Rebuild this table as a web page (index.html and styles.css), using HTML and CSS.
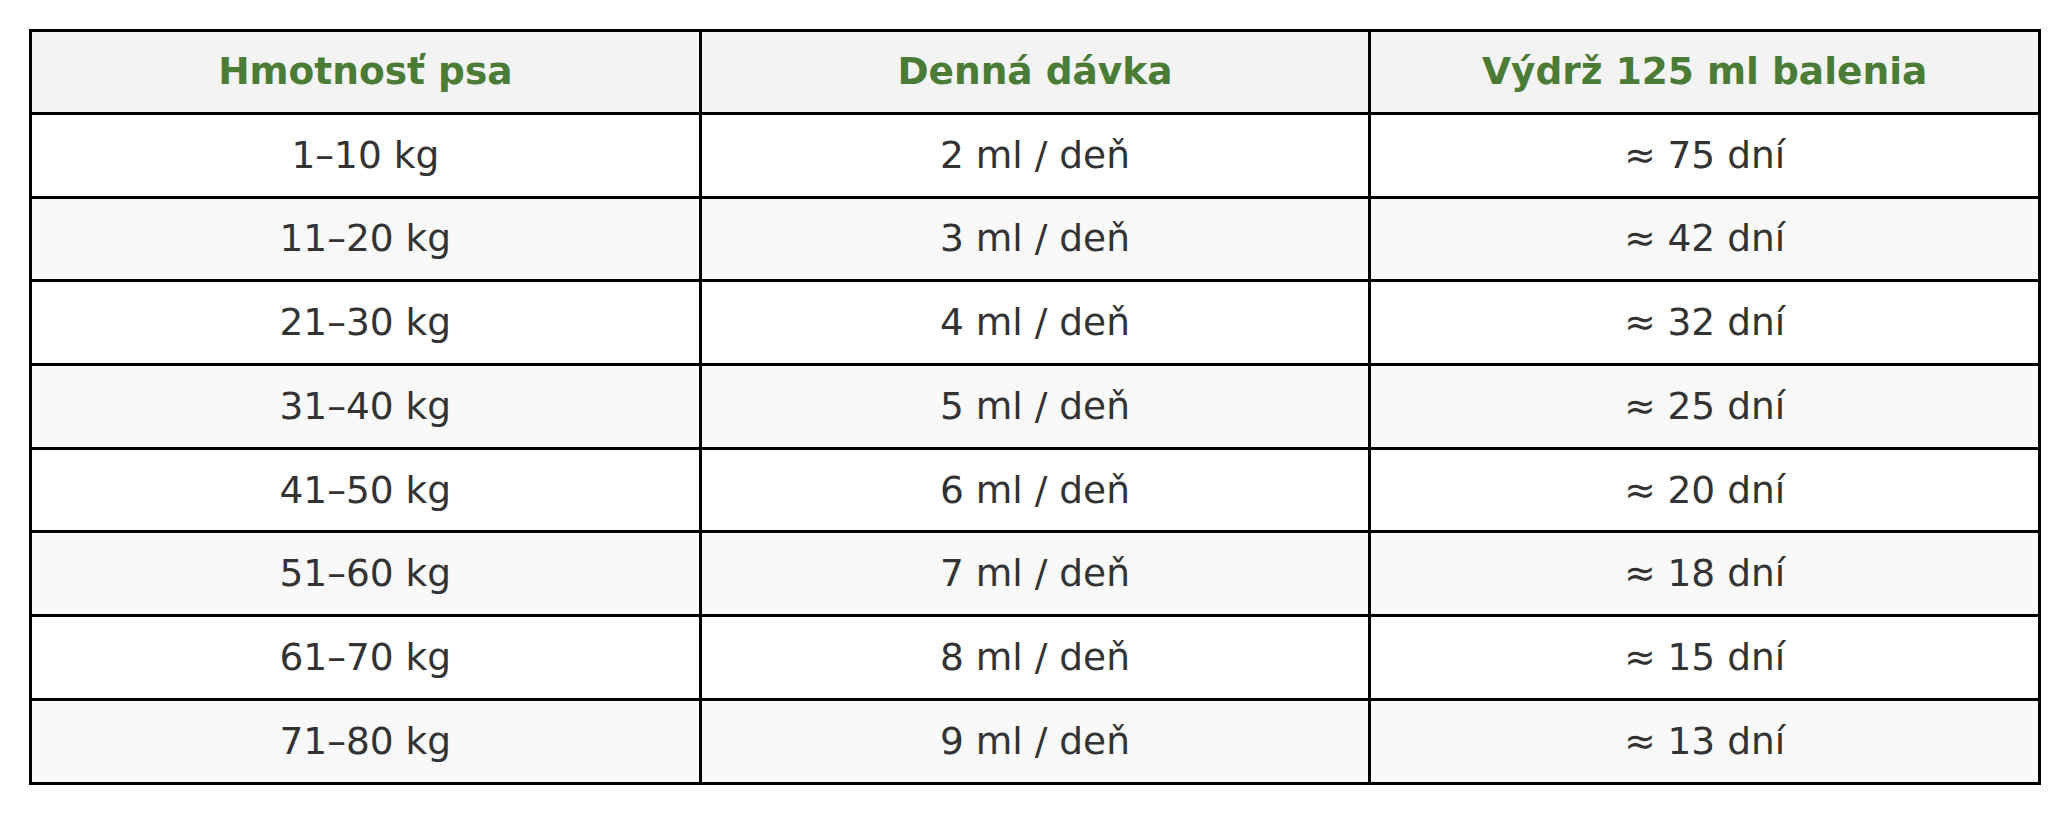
FILE: index.html
```html
<!DOCTYPE html>
<html lang="sk">
<head>
<meta charset="utf-8">
<title>Dávkovanie</title>
<link rel="stylesheet" href="styles.css">
</head>
<body>
<table class="dose-table">
  <thead>
    <tr><th>Hmotnosť psa</th><th>Denná dávka</th><th>Výdrž 125 ml balenia</th></tr>
  </thead>
  <tbody>
    <tr><td>1–10 kg</td><td>2 ml / deň</td><td>≈ 75 dní</td></tr>
    <tr><td>11–20 kg</td><td>3 ml / deň</td><td>≈ 42 dní</td></tr>
    <tr><td>21–30 kg</td><td>4 ml / deň</td><td>≈ 32 dní</td></tr>
    <tr><td>31–40 kg</td><td>5 ml / deň</td><td>≈ 25 dní</td></tr>
    <tr><td>41–50 kg</td><td>6 ml / deň</td><td>≈ 20 dní</td></tr>
    <tr><td>51–60 kg</td><td>7 ml / deň</td><td>≈ 18 dní</td></tr>
    <tr><td>61–70 kg</td><td>8 ml / deň</td><td>≈ 15 dní</td></tr>
    <tr><td>71–80 kg</td><td>9 ml / deň</td><td>≈ 13 dní</td></tr>
  </tbody>
</table>
</body>
</html>
```
FILE: styles.css
```css
html, body {
  margin: 0;
  padding: 0;
  background: #ffffff;
}
body {
  padding: 29px;
  font-family: "DejaVu Sans", "Liberation Sans", sans-serif;
}
.dose-table {
  width: 100%;
  box-sizing: border-box;
  border-collapse: separate;
  border-spacing: 0;
  border-left: 3px solid #000;
  border-top: 3px solid #000;
  table-layout: fixed;
}
.dose-table th,
.dose-table td {
  border-right: 3px solid #000;
  border-bottom: 3px solid #000;
  height: 80.7px;
  box-sizing: content-box;
  padding: 0;
  text-align: center;
  vertical-align: middle;
  font-size: 37.5px;
  line-height: 1.15;
}
.dose-table th {
  background: #f3f3f3;
  color: #4a7c35;
  font-weight: bold;
  height: 80px;
}
.dose-table td {
  color: #333333;
  font-weight: normal;
}
.dose-table tbody tr:nth-child(odd) td {
  background: #ffffff;
}
.dose-table tbody tr:nth-child(even) td {
  background: #f9f9f9;
}
```
